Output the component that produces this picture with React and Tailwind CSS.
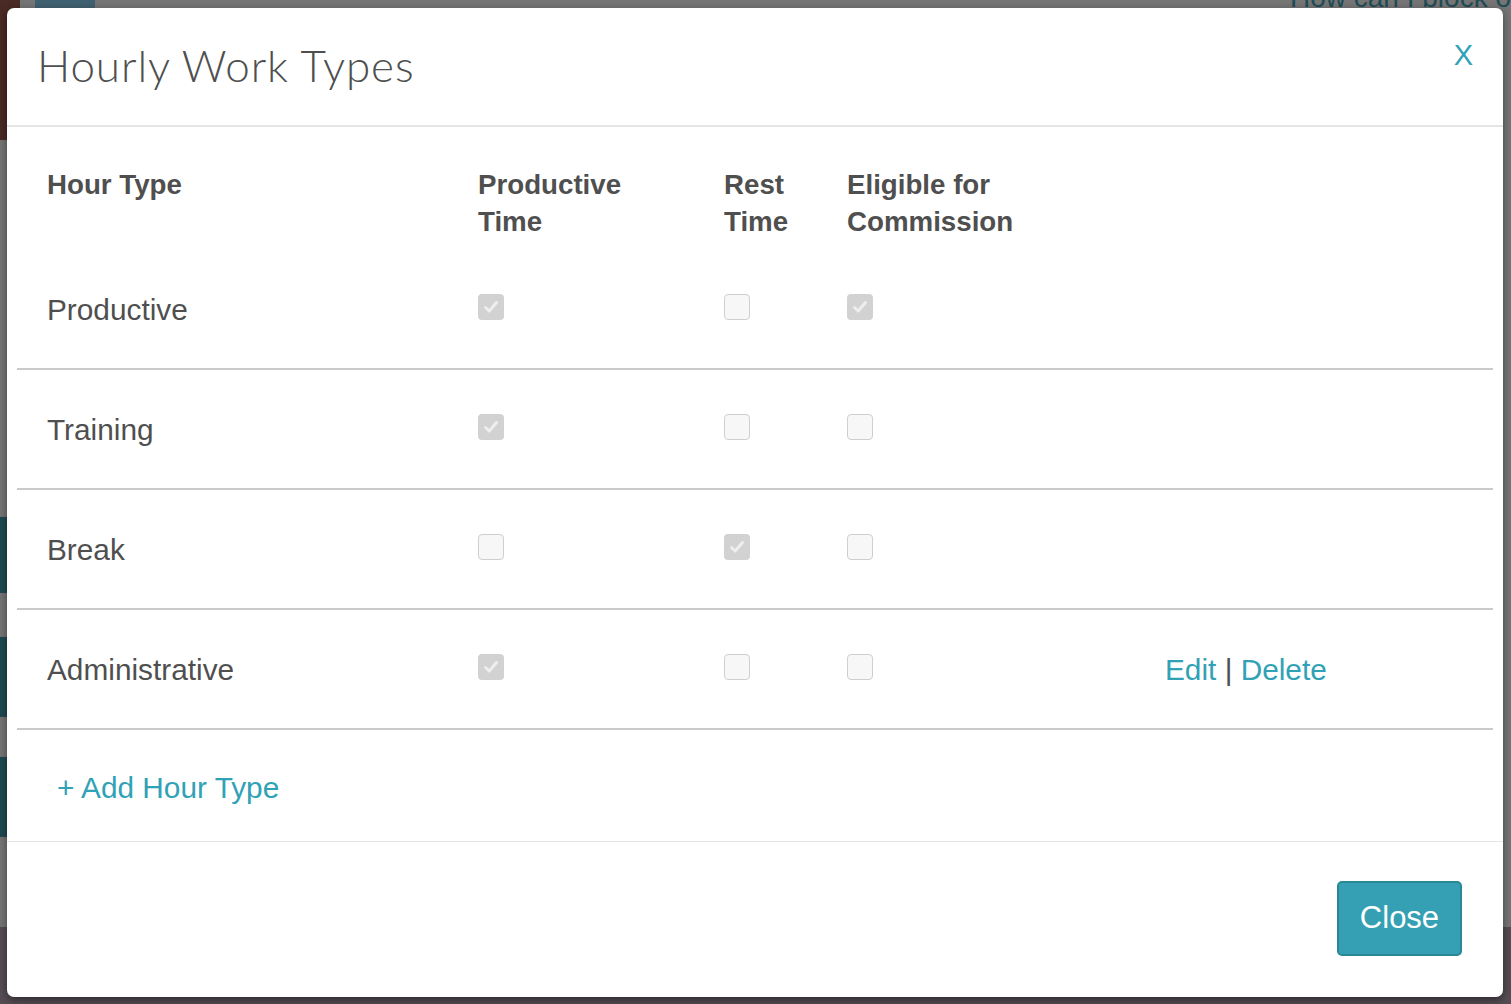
import React from "react";

function Box({ checked }) {
  if (checked) {
    return (
      <div className="w-[26px] h-[26px] rounded-[4px] bg-[#d2d2d2] flex items-center justify-center -mt-[4px]">
        <svg width="18" height="18" viewBox="0 0 18 18" fill="none">
          <path d="M3.5 9.5 L7.2 13 L14.5 4.5" stroke="#eeeeee" strokeWidth="3" strokeLinecap="round" strokeLinejoin="round" />
        </svg>
      </div>
    );
  }
  return <div className="w-[26px] h-[26px] rounded-[4px] bg-[#f7f7f7] border-[1.5px] border-[#cfcfcf] -mt-[4px]" />;
}

const rows = [
  { name: "Productive", p: true, r: false, e: true },
  { name: "Training", p: true, r: false, e: false },
  { name: "Break", p: false, r: true, e: false },
  { name: "Administrative", p: true, r: false, e: false, actions: true },
];

const cols = "grid grid-cols-[461px_246px_123px_318px_1fr]";

export default function App() {
  return (
    <div className="relative w-[1511px] h-[1004px] overflow-hidden font-['Liberation_Sans',Arial,sans-serif]">
      {/* dimmed page behind */}
      <div className="flex flex-col h-full">
        <div className="flex h-[927px] bg-[#757575]">
          <div className="w-[20px] flex flex-col">
            <div className="h-[140px] bg-[#4a2a24]" />
            <div className="h-[377px]" />
            <div className="h-[76px] bg-[#1f4a50]" />
            <div className="h-[44px]" />
            <div className="h-[80px] bg-[#1f4a50]" />
            <div className="h-[40px]" />
            <div className="h-[80px] bg-[#1f4a50]" />
          </div>
          <div className="flex-1 flex">
            <div className="w-[15px]" />
            <div className="w-[60px] h-[8px] bg-[#3f6070]" />
            <div className="flex-1" />
            <div className="text-[#1f4c55] text-[28px] leading-[20px] -mt-[12px]">How can I block o</div>
          </div>
        </div>
        <div className="flex-1 bg-[#554c54]" />
      </div>

      {/* modal */}
      <div className="absolute inset-0 pl-[7px] pt-[8px]">
        <div className="w-[1496px] h-[989px] bg-white rounded-[7px] shadow-[0_3px_8px_rgba(0,0,0,0.45)] flex flex-col">
          {/* header */}
          <div className="h-[119px] border-b-2 border-[#e5e5e5] flex items-start justify-between pl-[30px] pr-[30px]">
            <h1 className="font-['Lato',sans-serif] font-light text-[#4f4f4f] text-[44px] leading-[54px] mt-[30px] tracking-[0.9px]">
              Hourly Work Types
            </h1>
            <button className="text-[#31a2b6] text-[29px] leading-[30px] mt-[32px]">X</button>
          </div>

          {/* body */}
          <div className="px-[10px] flex flex-col">
            <div className={`${cols} pt-[39px] pb-[10px] text-[27.7px] leading-[37px] font-bold text-[#4f4f4f]`}>
              <div className="pl-[30px]">Hour Type</div>
              <div>
                Productive
                <br />
                Time
              </div>
              <div>
                Rest
                <br />
                Time
              </div>
              <div>
                Eligible for
                <br />
                Commission
              </div>
              <div />
            </div>
            {rows.map((r) => (
              <div key={r.name} className={`${cols} h-[120px] border-b-2 border-[#cacaca] items-center text-[29.8px] leading-[35px] text-[#4f4f4f]`}>
                <div className="pl-[30px]">{r.name}</div>
                <div>
                  <Box checked={r.p} />
                </div>
                <div>
                  <Box checked={r.r} />
                </div>
                <div>
                  <Box checked={r.e} />
                </div>
                <div>
                  {r.actions && (
                    <span className="text-[#31a2b6]">
                      Edit <span className="text-[#4f4f4f]">|</span> Delete
                    </span>
                  )}
                </div>
              </div>
            ))}
            <div className="h-[111px] flex items-center pl-[40px] pt-[4px]">
              <span className="text-[29.8px] leading-[35px] text-[#31a2b6]">+ Add Hour Type</span>
            </div>
          </div>

          {/* footer */}
          <div className="border-t border-[#e5e5e5] flex-1 flex justify-end items-start pt-[39px] pr-[41px]">
            <button className="w-[125px] h-[75px] rounded-[5px] bg-[#35a0b3] border-2 border-[#2a8798] text-white text-[31px]">
              Close
            </button>
          </div>
        </div>
      </div>
    </div>
  );
}
